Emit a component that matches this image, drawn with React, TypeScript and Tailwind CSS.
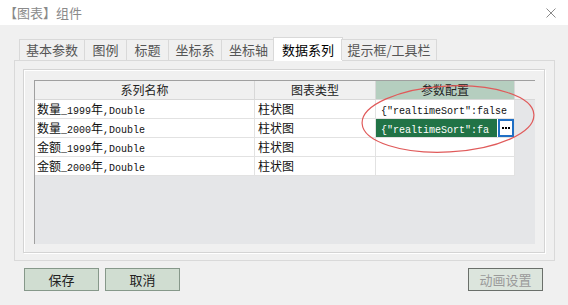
import React from "react";

const tabs = [
  { label: "基本参数", w: "w-[65px]" },
  { label: "图例", w: "w-[42px]" },
  { label: "标题", w: "w-[42px]" },
  { label: "坐标系", w: "w-[53px]" },
  { label: "坐标轴", w: "w-[54px]" },
  { label: "数据系列", w: "w-[70px]", active: true },
  { label: "提示框/工具栏", w: "w-[96px]" },
];

const rows = [
  { name: "数量_1999年,Double", type: "柱状图", cfg: '{"realtimeSort":false' },
  { name: "数量_2000年,Double", type: "柱状图", cfg: '{"realtimeSort":fa', editing: true },
  { name: "金额_1999年,Double", type: "柱状图", cfg: "" },
  { name: "金额_2000年,Double", type: "柱状图", cfg: "" },
];

const cjk = '"Noto Sans CJK SC", sans-serif';

// SimSun-ish mix: CJK at 12px, latin monospaced at 6px per char
const Mixed = ({ text }: { text: string }) => {
  const parts = text.match(/[\u4e00-\u9fff]+|[^\u4e00-\u9fff]+/g) || [];
  return (
    <span className="whitespace-pre">
      {parts.map((p, i) =>
        /[\u4e00-\u9fff]/.test(p) ? (
          <span key={i} className="text-[12px]" style={{ fontFamily: cjk }}>{p}</span>
        ) : (
          <span key={i} className="text-[10px] font-['Liberation_Mono',monospace]">{p}</span>
        ),
      )}
    </span>
  );
};

export default function App() {
  return (
    <div className="w-[568px] h-[305px] bg-[#f0f0f0] overflow-hidden font-['Noto_Sans_CJK_SC',sans-serif] text-[12px]">
      {/* title bar */}
      <div className="h-[25px] bg-white flex items-center justify-between pl-[4px] pr-[12px]">
        <span className="text-[13px] text-[#8a8a8a]">【图表】组件</span>
        <svg width="10" height="10" viewBox="0 0 10 10" className="text-[#8a8a8a]">
          <path d="M0.5 0.5 L9.5 9.5 M9.5 0.5 L0.5 9.5" stroke="currentColor" strokeWidth="1" />
        </svg>
      </div>

      {/* tabs */}
      <div className="flex items-end ml-[19px] mt-[12px] h-[24px] relative z-10">
        {tabs.map((t) =>
          t.active ? (
            <div key={t.label} className={`${t.w} -ml-[2px] -mr-[2px] h-[24px] bg-white border border-b-0 border-[#d9d9d9] flex items-center justify-center text-[13px] text-black`}>
              {t.label}
            </div>
          ) : (
            <div key={t.label} className={`${t.w} h-[21px] mb-[1px] bg-[#f0f0f0] border border-b-0 border-r-0 last:border-r border-[#d9d9d9] flex items-center justify-center text-[13px] text-[#555]`}>
              {t.label}
            </div>
          ),
        )}
      </div>

      {/* panel */}
      <div className="ml-[14px] -mt-[1px] w-[541px] h-[201px] border border-[#d9d9d9] bg-[#f0f0f0] p-[8px]">
        <div className="w-[522px] h-[184px] border border-[#d4d4d4] shadow-[inset_1px_1px_0_#ffffff,1px_1px_0_#ffffff] p-[10px]">
          <div className="relative w-[501px] h-[164px] bg-[#e5e6e8] border-t border-l border-[#a0a0a0]">
            {/* header */}
            <div className="flex h-[19px] bg-[#f0f0f0] border-b border-[#d8d8d8] text-[12px] text-[#222]">
              <div className="w-[220px] border-r border-[#d8d8d8] flex items-center justify-center">系列名称</div>
              <div className="w-[121px] border-r border-[#d8d8d8] flex items-center justify-center">图表类型</div>
              <div className="w-[139px] bg-[#b5cebf] border-r border-[#d8d8d8] flex items-center justify-center">参数配置</div>
            </div>
            {rows.map((r) => (
              <div key={r.name} className="flex h-[19px] text-[#111]">
                <div className="w-[220px] bg-white border-r border-b border-[#e2e2e2] flex items-center pl-[2px]">
                  <Mixed text={r.name} />
                </div>
                <div className="w-[121px] bg-white border-r border-b border-[#e2e2e2] flex items-center pl-[3px]">
                  {r.type}
                </div>
                {r.editing ? (
                  <div className="w-[139px] bg-white border-r border-b border-[#e2e2e2] flex items-stretch">
                    <div className="w-[122px] bg-[#217346] text-white flex items-center pl-[5px] overflow-hidden">
                      <Mixed text={r.cfg} />
                    </div>
                    <div className="w-[16px] ml-[1px] border-2 border-[#1f6fc4] bg-white flex items-center justify-center gap-[1px]">
                      <div className="w-[2px] h-[2px] bg-black" />
                      <div className="w-[2px] h-[2px] bg-black" />
                      <div className="w-[2px] h-[2px] bg-black" />
                    </div>
                  </div>
                ) : (
                  <div className="w-[139px] bg-white border-r border-b border-[#e2e2e2] flex items-center pl-[5px]">
                    <Mixed text={r.cfg} />
                  </div>
                )}
              </div>
            ))}
            {/* annotation ellipse */}
            <svg className="absolute left-0 top-0 pointer-events-none" width="501" height="164">
              <ellipse cx="413" cy="38" rx="86" ry="33" fill="none" stroke="#e05a5a" strokeWidth="1.2" transform="rotate(-3 413 38)" />
            </svg>
          </div>
        </div>
      </div>

      {/* buttons */}
      <div className="flex mt-[7px] pl-[24px] pr-[25px] items-center">
        <button className="w-[75px] h-[23px] bg-[#d0ddd1] border border-[#86988a] text-[13px] text-[#222] flex items-center justify-center">保存</button>
        <button className="w-[75px] h-[23px] ml-[6px] bg-[#d0ddd1] border border-[#86988a] text-[13px] text-[#222] flex items-center justify-center">取消</button>
        <button className="w-[75px] h-[23px] ml-auto bg-[#dce5dd] border border-[#6a6f6a] text-[13px] text-[#9a9a9a] flex items-center justify-center">动画设置</button>
      </div>
    </div>
  );
}
